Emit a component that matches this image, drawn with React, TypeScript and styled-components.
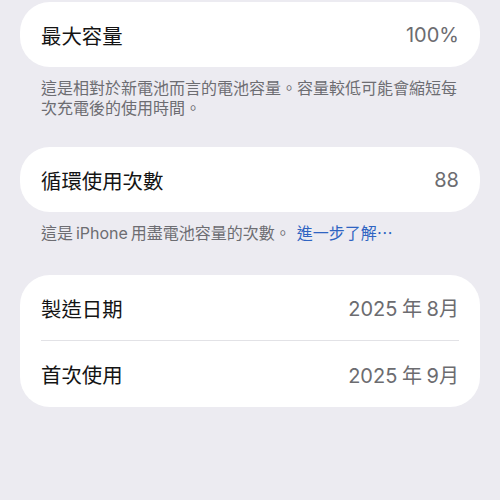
import React from "react";
import styled, { createGlobalStyle } from "styled-components";

const GlobalStyle = createGlobalStyle`
  html, body {
    margin: 0;
    padding: 0;
    background: #ecebf1;
  }
  body {
    font-family: Inter, "Noto Sans CJK TC", "Noto Sans", sans-serif;
    -webkit-font-smoothing: antialiased;
  }
`;

const Page = styled.div`
  width: 500px;
  height: 500px;
  box-sizing: border-box;
  padding: 2px 20px 0;
  background: #ecebf1;
  display: flex;
  flex-direction: column;
`;

const Section = styled.section<{ $after?: number }>`
  display: flex;
  flex-direction: column;
  margin-bottom: ${(p) => p.$after ?? 0}px;
`;

const Card = styled.div`
  background: #ffffff;
  border-radius: 30px;
  padding: 0 21px;
`;

const Row = styled.div`
  display: flex;
  align-items: center;
  justify-content: space-between;
  height: 65px;
  & + & {
    border-top: 1px solid #e2e2e6;
    height: 66px;
  }
`;

const Label = styled.span`
  font-size: 20.4px;
  color: #141414;
`;

const Value = styled.span`
  font-size: 20px;
  color: #6c6c70;
  word-spacing: -1px;
`;

const Footnote = styled.p`
  margin: 11px 0 0;
  padding: 0 21px;
  font-size: 16px;
  line-height: 20px;
  color: #6d6d72;
`;

const Link = styled.a`
  color: #2f64c2;
  text-decoration: none;
  margin-left: 6px;
`;

export default function App() {
  return (
    <>
      <GlobalStyle />
      <Page>
        <Section $after={29}>
          <Card>
            <Row>
              <Label>最大容量</Label>
              <Value>100%</Value>
            </Row>
          </Card>
          <Footnote>
            這是相對於新電池而言的電池容量。容量較低可能會縮短每次充電後的使用時間。
          </Footnote>
        </Section>
        <Section $after={32}>
          <Card>
            <Row>
              <Label>循環使用次數</Label>
              <Value>88</Value>
            </Row>
          </Card>
          <Footnote>
            這是{"\u2009"}iPhone{"\u2009"}用盡電池容量的次數。
            <Link>進一步了解⋯</Link>
          </Footnote>
        </Section>
        <Section>
          <Card>
            <Row>
              <Label>製造日期</Label>
              <Value>2025 年 8月</Value>
            </Row>
            <Row>
              <Label>首次使用</Label>
              <Value>2025 年 9月</Value>
            </Row>
          </Card>
        </Section>
      </Page>
    </>
  );
}
